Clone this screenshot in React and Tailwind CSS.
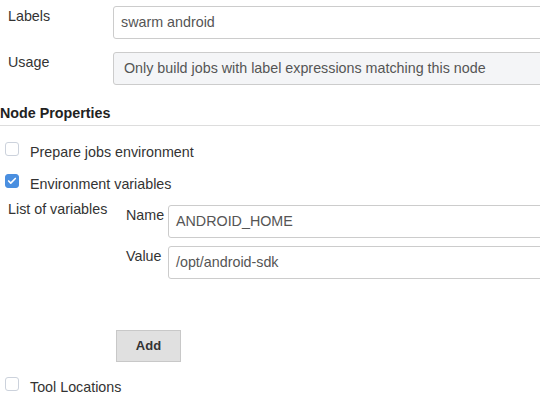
import { Check } from 'lucide-react';

const font = { fontFamily: '"Liberation Sans", Arial, sans-serif' };

const Checkbox = ({ checked, label }) => (
  <div className="flex items-start h-5">
    <div
      className={`ml-[5px] w-[14px] h-[14px] shrink-0 rounded-[3px] border flex items-center justify-center ${
        checked ? 'bg-[#4a8fe0] border-[#4a8fe0]' : 'bg-white border-[#ccd2dc]'
      }`}
    >
      {checked && <Check className="w-[10px] h-[10px] text-white" strokeWidth={4} />}
    </div>
    <span className="ml-[11px] text-[14.3px] leading-5 text-[#333]">{label}</span>
  </div>
);

const TextInput = ({ value, className = '' }) => (
  <div
    className={`h-[33px] flex items-center px-[7px] border border-[#ccc] rounded-[3px] bg-white text-[14.3px] text-[#555] ${className}`}
  >
    {value}
  </div>
);

export default function App() {
  return (
    <div className="w-[540px] h-[405px] overflow-hidden bg-white text-[#333]" style={font}>
      <div className="pt-[6px]">
        {/* Labels */}
        <div className="flex items-start">
          <div className="w-[113px] shrink-0 pl-2 text-[14.3px] leading-5">Labels</div>
          <TextInput value="swarm android" className="w-[460px] shrink-0" />
        </div>

        {/* Usage */}
        <div className="flex items-start mt-[13px]">
          <div className="w-[113px] shrink-0 pl-2 text-[14.3px] leading-5">Usage</div>
          <div className="w-[460px] shrink-0 h-[33px] flex items-center pl-[10px] border border-[#ccc] rounded-[3px] bg-[#f4f5f7] text-[14.3px] text-[#555]">
            Only build jobs with label expressions matching this node
          </div>
        </div>

        {/* Node Properties */}
        <div className="mt-[18px] text-[14.3px] leading-5 font-bold text-[#222]">Node Properties</div>
        <div className="mt-[2px] border-t border-[#ddd]" />

        <div className="mt-[16px]">
          <Checkbox label="Prepare jobs environment" />
        </div>
        <div className="mt-[12px]">
          <Checkbox checked label="Environment variables" />
        </div>

        {/* List of variables */}
        <div className="flex items-start mt-[5px]">
          <div className="w-[118px] shrink-0 pl-2 text-[14.3px] leading-5 text-[#333]">List of variables</div>
          <div className="flex flex-col mt-[6px]">
            <div className="flex items-start">
              <div className="w-[50px] shrink-0 pl-2 text-[14.3px] leading-5">Name</div>
              <TextInput value="ANDROID_HOME" className="w-[400px] shrink-0" />
            </div>
            <div className="flex items-start mt-[8px]">
              <div className="w-[50px] shrink-0 pl-2 text-[14.3px] leading-5">Value</div>
              <TextInput value="/opt/android-sdk" className="w-[400px] shrink-0" />
            </div>
          </div>
        </div>

        {/* Add */}
        <div className="mt-[51px] pl-[116px]">
          <button className="w-[65px] h-[32px] bg-[#e0e0e0] border border-[#c8c8c8] text-[13px] font-bold text-[#333]">
            Add
          </button>
        </div>

        <div className="mt-[15px]">
          <Checkbox label="Tool Locations" />
        </div>
      </div>
    </div>
  );
}
